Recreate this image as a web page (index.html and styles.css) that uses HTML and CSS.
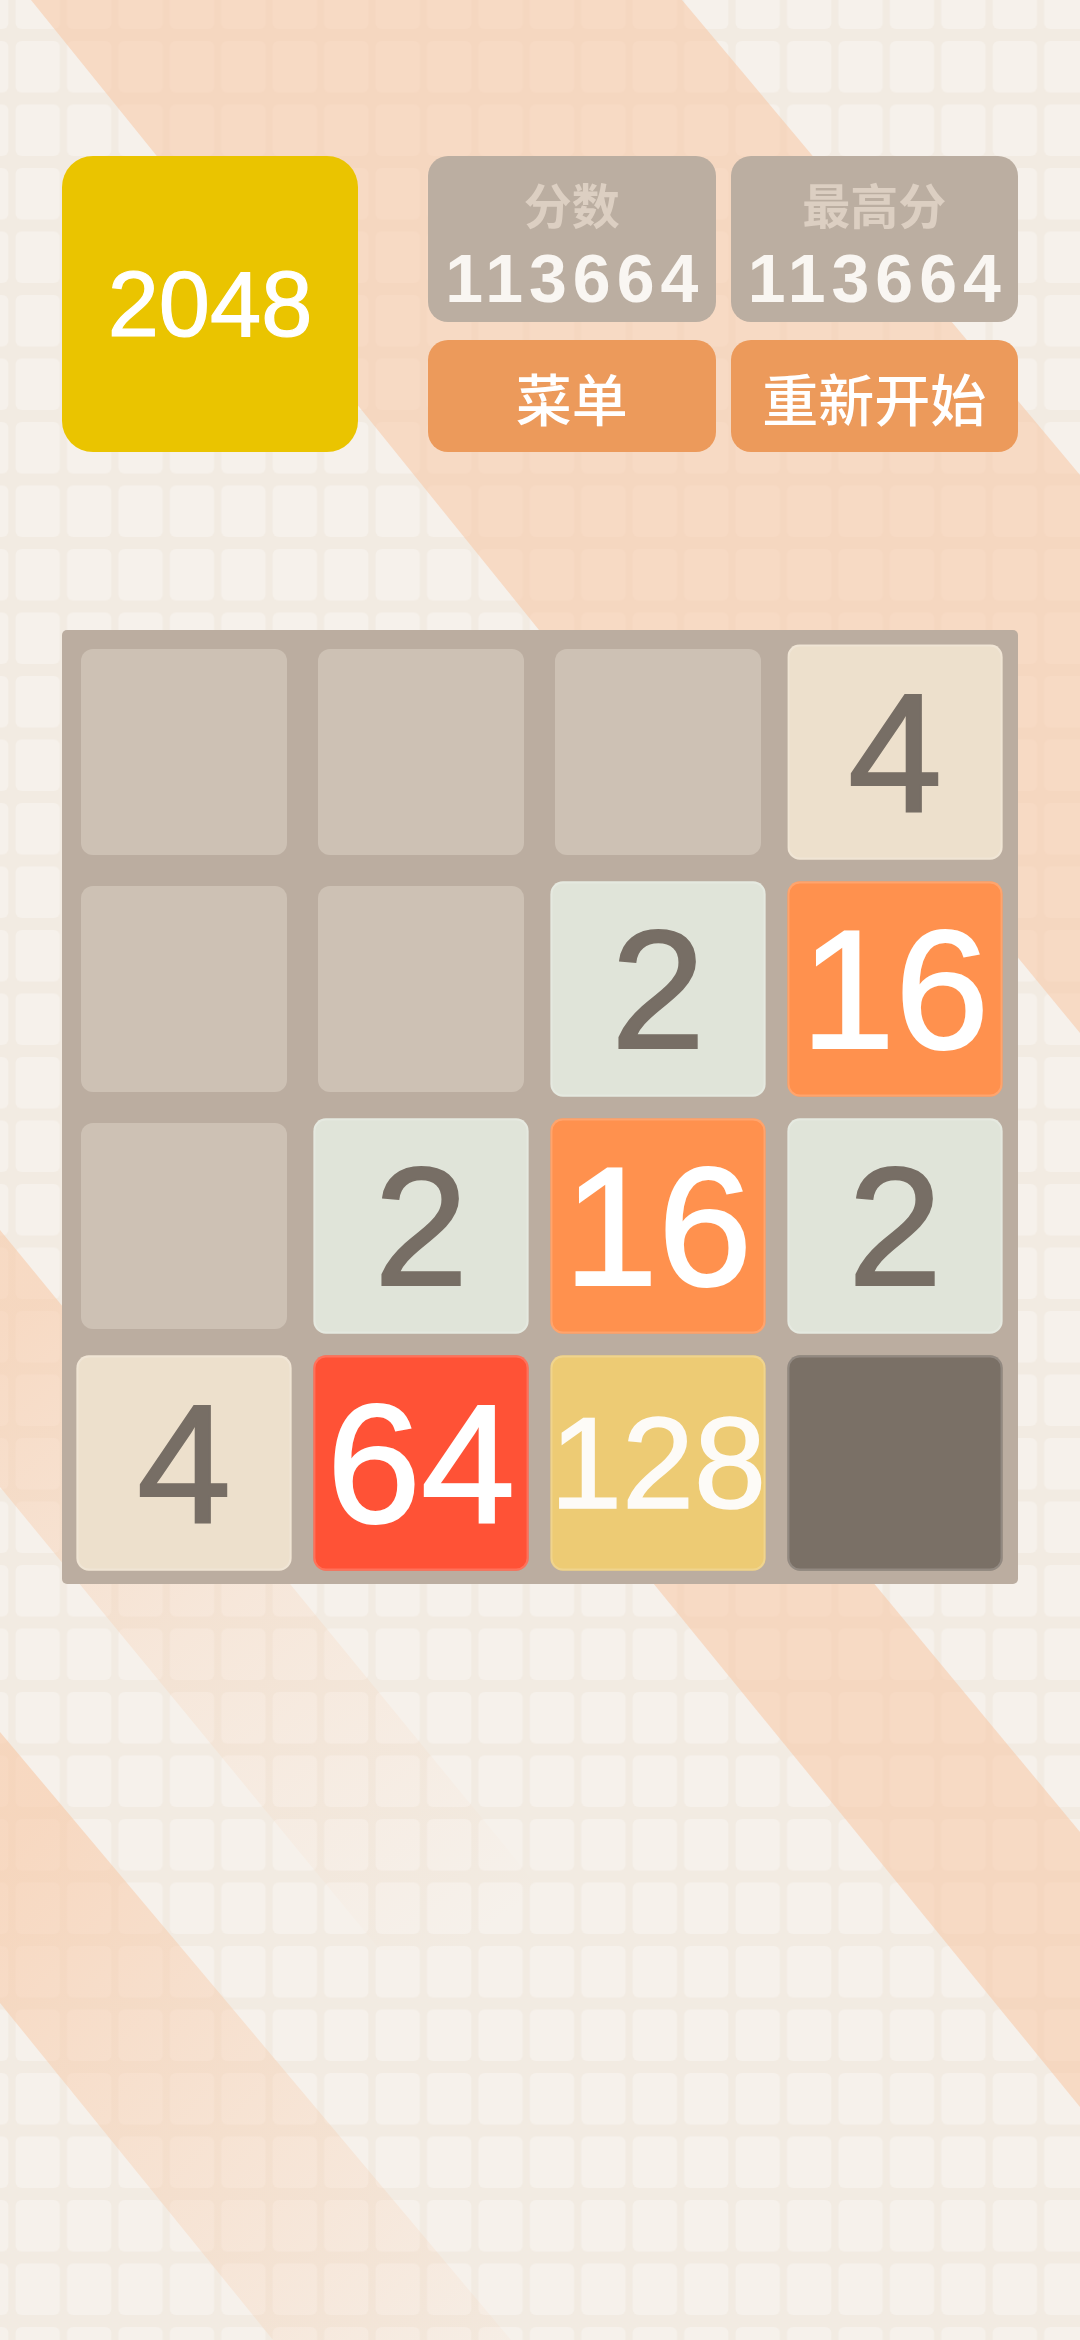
FILE: index.html
```html
<!DOCTYPE html>
<html lang="zh-CN">
<head>
<meta charset="utf-8">
<title>2048</title>
<link rel="stylesheet" href="styles.css">
</head>
<body>
<div class="backdrop" aria-hidden="true">
  <svg class="bg" viewBox="0 0 1080 2340" width="1080" height="2340" xmlns="http://www.w3.org/2000/svg">
    <defs>
      <pattern id="grid" x="12" y="35" width="51.43" height="63.5" patternUnits="userSpaceOnUse">
        <rect width="51.43" height="63.5" fill="#f2ebe2"/>
        <rect x="3.5" y="6" width="44.4" height="51.5" rx="6" fill="#f6f1eb"/>
      </pattern>
      <linearGradient id="fadeC" gradientUnits="userSpaceOnUse" x1="0" y1="1330" x2="460" y2="1950">
        <stop offset="0" stop-color="#f8c8a5" stop-opacity="0.56"/>
        <stop offset="0.45" stop-color="#f8c8a5" stop-opacity="0.25"/>
        <stop offset="1" stop-color="#f8c8a5" stop-opacity="0"/>
      </linearGradient>
      <linearGradient id="fadeD" gradientUnits="userSpaceOnUse" x1="0" y1="1860" x2="520" y2="2340">
        <stop offset="0" stop-color="#f8c8a5" stop-opacity="0.6"/>
        <stop offset="1" stop-color="#f8c8a5" stop-opacity="0.08"/>
      </linearGradient>
    </defs>
    <rect width="1080" height="2340" fill="url(#grid)"/>
    <g fill="#f8c8a5" fill-opacity="0.56">
      <polygon points="31,0 682,0 1080,475 1080,1033 1010,948 560,660 539,630"/>
      <polygon points="504,1400 722,1400 1080,1832 1080,2107"/>
    </g>
    <polygon points="0,1230 590,1950 380,1950 0,1487" fill="url(#fadeC)"/>
    <polygon points="0,1732 511,2340 273,2340 0,2003" fill="url(#fadeD)"/>
  </svg>
</div>

<main class="page">
  <header class="top">
    <div class="logo">2048</div>
    <div class="panel">
      <div class="score">
        <span class="label">分数</span>
        <span class="value">113664</span>
      </div>
      <div class="score">
        <span class="label">最高分</span>
        <span class="value">113664</span>
      </div>
      <button class="btn">菜单</button>
      <button class="btn">重新开始</button>
    </div>
  </header>

  <section class="board">
    <div class="tile"></div>
    <div class="tile"></div>
    <div class="tile"></div>
    <div class="tile v t4">4</div>

    <div class="tile"></div>
    <div class="tile"></div>
    <div class="tile v t2">2</div>
    <div class="tile v t16">16</div>

    <div class="tile"></div>
    <div class="tile v t2">2</div>
    <div class="tile v t16">16</div>
    <div class="tile v t2">2</div>

    <div class="tile v t4">4</div>
    <div class="tile v t64">64</div>
    <div class="tile v t128">128</div>
    <div class="tile v tdark"></div>
  </section>
</main>
</body>
</html>
```

FILE: styles.css
```css
html, body {
  margin: 0;
  padding: 0;
  width: 1080px;
  height: 2340px;
  overflow: hidden;
  background: #f4ede5;
}

body {
  font-family: "Liberation Sans", "Noto Sans CJK SC", sans-serif;
}

.backdrop {
  position: fixed;
  inset: 0;
  z-index: 0;
}

.bg {
  display: block;
}

.page {
  position: relative;
  z-index: 1;
  padding: 156px 62px 0;
}

.top {
  display: flex;
  gap: 70px;
  height: 296px;
}

.logo {
  flex: 0 0 296px;
  height: 296px;
  border-radius: 31px;
  background: #eac400;
  color: #ffffff;
  font-size: 92px;
  -webkit-text-stroke: 1.2px #ffffff;
  display: flex;
  align-items: center;
  justify-content: center;
}

.panel {
  flex: 1;
  display: grid;
  grid-template-columns: 1fr 1fr;
  grid-template-rows: 166px 112px;
  column-gap: 15px;
  row-gap: 18px;
}

.score {
  background: #bbaea1;
  border-radius: 20px;
  display: flex;
  flex-direction: column;
  align-items: center;
  padding-top: 19px;
  box-sizing: border-box;
}

.label {
  font-family: "Noto Sans CJK SC", sans-serif;
  font-size: 48px;
  line-height: 56px;
  font-weight: 700;
  color: #dccfc2;
}

.value {
  font-family: "Liberation Sans", sans-serif;
  font-size: 68px;
  line-height: 70px;
  font-weight: 700;
  letter-spacing: 6px;
  margin-right: -6px;
  margin-top: 12px;
  color: #f9f6f2;
}

.btn {
  background: #ec9a5b;
  border: 0;
  border-radius: 20px;
  color: #ffffff;
  font-family: "Noto Sans CJK SC", sans-serif;
  font-size: 56px;
  font-weight: 500;
  padding: 0;
  margin: 0;
}

.board {
  margin-top: 178px;
  width: 956px;
  height: 954px;
  box-sizing: border-box;
  padding: 19px;
  background: #bbada0;
  border-radius: 5px;
  display: grid;
  grid-template-columns: repeat(4, 206px);
  grid-template-rows: repeat(4, 206px);
  gap: 31px;
}

.tile {
  border-radius: 12px;
  background: #cdc1b4;
  display: flex;
  align-items: center;
  justify-content: center;
  font-family: "Liberation Sans", sans-serif;
  font-size: 162px;
  line-height: 1;
  color: #776e65;
  -webkit-text-stroke: 2px currentColor;
}

.tile.v {
  transform: scale(1.045);
  box-shadow: inset 0 0 0 2px rgba(255, 255, 255, 0.18);
}

.t2 { background: #e0e4d9; }
.t4 { background: #ede0cc; }
.t16 { background: #ff914e; color: #ffffff; }
.t64 { background: #ff5236; color: #ffffff; }
.t128 { background: #edcb74; color: #fdfbf7; font-size: 124px; -webkit-text-stroke: 1.5px currentColor; }
.tdark { background: #7a7066; }
```
